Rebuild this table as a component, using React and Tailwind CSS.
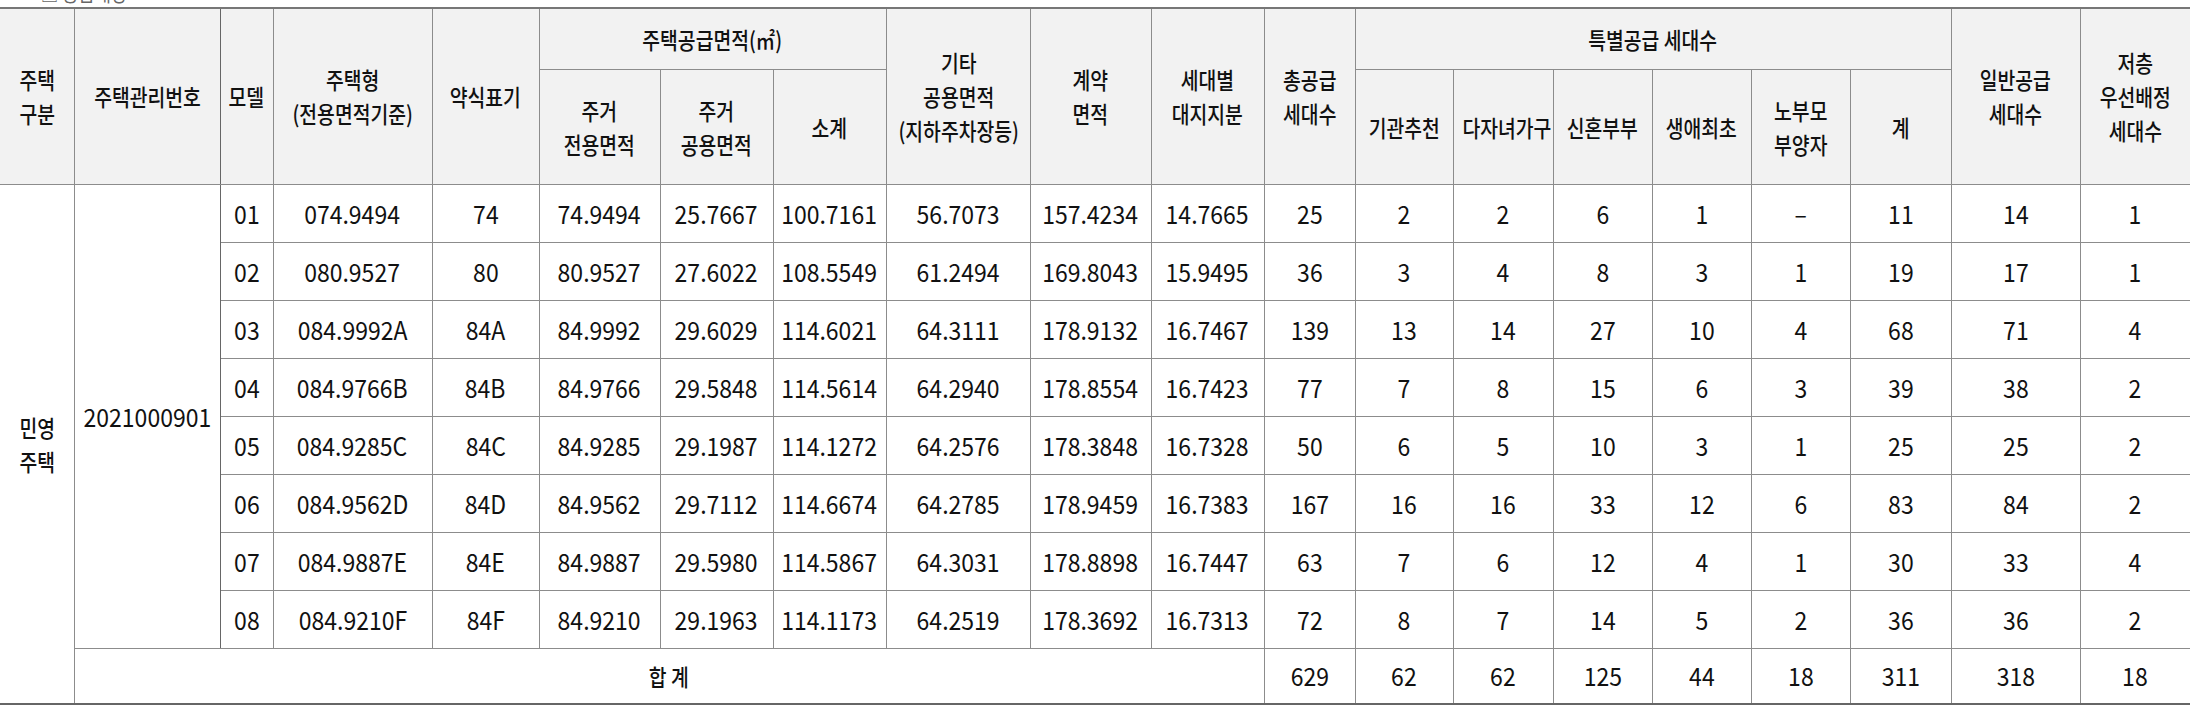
const rows = [
  ["01", "074.9494", "74", "74.9494", "25.7667", "100.7161", "56.7073", "157.4234", "14.7665", "25", "2", "2", "6", "1", "–", "11", "14", "1"],
  ["02", "080.9527", "80", "80.9527", "27.6022", "108.5549", "61.2494", "169.8043", "15.9495", "36", "3", "4", "8", "3", "1", "19", "17", "1"],
  ["03", "084.9992A", "84A", "84.9992", "29.6029", "114.6021", "64.3111", "178.9132", "16.7467", "139", "13", "14", "27", "10", "4", "68", "71", "4"],
  ["04", "084.9766B", "84B", "84.9766", "29.5848", "114.5614", "64.2940", "178.8554", "16.7423", "77", "7", "8", "15", "6", "3", "39", "38", "2"],
  ["05", "084.9285C", "84C", "84.9285", "29.1987", "114.1272", "64.2576", "178.3848", "16.7328", "50", "6", "5", "10", "3", "1", "25", "25", "2"],
  ["06", "084.9562D", "84D", "84.9562", "29.7112", "114.6674", "64.2785", "178.9459", "16.7383", "167", "16", "16", "33", "12", "6", "83", "84", "2"],
  ["07", "084.9887E", "84E", "84.9887", "29.5980", "114.5867", "64.3031", "178.8898", "16.7447", "63", "7", "6", "12", "4", "1", "30", "33", "4"],
  ["08", "084.9210F", "84F", "84.9210", "29.1963", "114.1173", "64.2519", "178.3692", "16.7313", "72", "8", "7", "14", "5", "2", "36", "36", "2"],
];
const totals = ["629", "62", "62", "125", "44", "18", "311", "318", "18"];

const colW = [
  "w-[74px]", "w-[146px]", "w-[53px]", "w-[159px]", "w-[107px]", "w-[121px]", "w-[113px]", "w-[113px]", "w-[144px]", "w-[121px]",
  "w-[113px]", "w-[91px]", "w-[98px]", "w-[100px]", "w-[99px]", "w-[99px]", "w-[99px]", "w-[101px]", "w-[129px]", "w-[110px]",
];

function K({ children }) {
  return (
    <span className="inline-block scale-x-[0.84] whitespace-nowrap text-[23px] font-medium leading-[34px]">{children}</span>
  );
}

function N({ children }) {
  return (
    <span className="inline-block scale-x-[0.92] whitespace-nowrap text-[25px] leading-[30px]">{children}</span>
  );
}

function Th({ children, rs, cs, cls = "" }) {
  return (
    <th
      rowSpan={rs}
      colSpan={cs}
      className={"border border-[#8c8c8c] bg-[#f2f2f2] p-0 text-center align-middle font-normal " + cls}
    >
      <K>{children}</K>
    </th>
  );
}

function Td({ children, cls = "" }) {
  return (
    <td className={"border border-[#8c8c8c] p-0 text-center align-middle " + cls}>
      <N>{children}</N>
    </td>
  );
}

export default function App() {
  return (
    <div className="w-[2190px] h-[708px] overflow-hidden bg-white text-[#111] font-['Noto_Sans_CJK_KR','Noto_Sans',sans-serif]">
      <div className="h-[7px] overflow-hidden">
        <div className="-mt-[22px] pl-[30px] text-[22px] leading-[26px] text-[#666]">
          <span className="inline-block scale-x-[0.8]">□ 공급대상</span>
        </div>
      </div>
      <table className="w-[2190px] table-fixed border-collapse border-t-2 border-b-2 border-t-[#777] border-b-[#666]">
        <colgroup>
          {colW.map((c, i) => (
            <col key={i} className={c} />
          ))}
        </colgroup>
        <thead>
          <tr className="h-[61px]">
            <Th rs={2} cls="border-l-0">주택<br />구분</Th>
            <Th rs={2} cls="border-l-[#666] border-r-[#666]">주택관리번호</Th>
            <Th rs={2}>모델</Th>
            <Th rs={2}>주택형<br />(전용면적기준)</Th>
            <Th rs={2}>약식표기</Th>
            <Th cs={3}>주택공급면적(㎡)</Th>
            <Th rs={2}>기타<br />공용면적<br />(지하주차장등)</Th>
            <Th rs={2}>계약<br />면적</Th>
            <Th rs={2}>세대별<br />대지지분</Th>
            <Th rs={2}>총공급<br />세대수</Th>
            <Th cs={6}>특별공급 세대수</Th>
            <Th rs={2}>일반공급<br />세대수</Th>
            <Th rs={2} cls="border-r-0">저층<br />우선배정<br />세대수</Th>
          </tr>
          <tr className="h-[115px]">
            <Th>주거<br />전용면적</Th>
            <Th>주거<br />공용면적</Th>
            <Th>소계</Th>
            <Th>기관추천</Th>
            <Th>다자녀가구</Th>
            <Th>신혼부부</Th>
            <Th>생애최초</Th>
            <Th>노부모<br />부양자</Th>
            <Th>계</Th>
          </tr>
        </thead>
        <tbody>
          {rows.map((r, i) => (
            <tr key={i} className="h-[58px]">
              {i === 0 && (
                <td rowSpan={9} className="border border-[#8c8c8c] border-l-0 p-0 text-center align-middle">
                  <K>민영<br />주택</K>
                </td>
              )}
              {i === 0 && (
                <td rowSpan={8} className="border border-[#8c8c8c] border-l-[#666] border-r-[#666] p-0 text-center align-middle">
                  <N>2021000901</N>
                </td>
              )}
              {r.map((v, j) => (
                <Td key={j} cls={j === r.length - 1 ? "border-r-0" : ""}>{v}</Td>
              ))}
            </tr>
          ))}
          <tr className="h-[56px]">
            <td colSpan={10} className="border border-[#8c8c8c] border-l-[#666] p-0 text-center align-middle">
              <K>합 계</K>
            </td>
            {totals.map((v, j) => (
              <Td key={j} cls={j === totals.length - 1 ? "border-r-0" : ""}>{v}</Td>
            ))}
          </tr>
        </tbody>
      </table>
    </div>
  );
}
